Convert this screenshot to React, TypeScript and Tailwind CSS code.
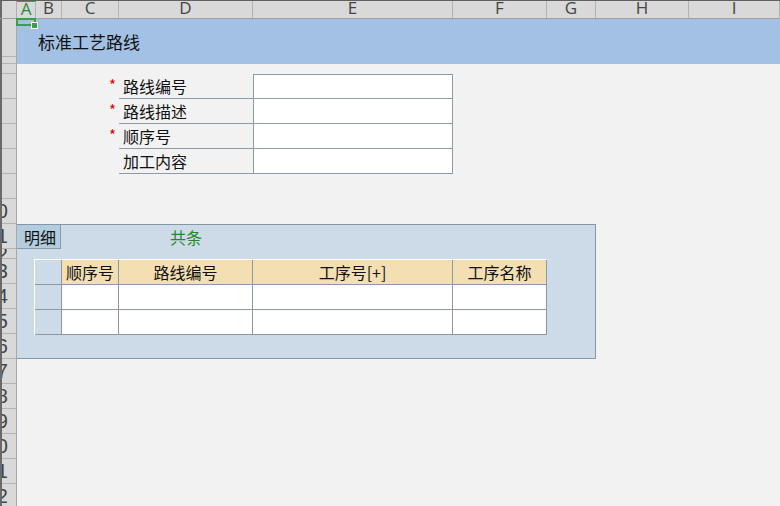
import React from "react";

const colHeads = [
  { name: "A", cls: "w-[19px] text-[#2f8a3c] border-t border-t-[#3d9e47]" },
  { name: "B", cls: "w-[26px]" },
  { name: "C", cls: "w-[57px]" },
  { name: "D", cls: "w-[134px]" },
  { name: "E", cls: "w-[200px]" },
  { name: "F", cls: "w-[94px]" },
  { name: "G", cls: "w-[49px]" },
  { name: "H", cls: "w-[93px]" },
  { name: "I", cls: "w-[91px]" },
];

const rowHeads = [
  { h: "h-[38px]", label: "" },
  { h: "h-[7px]", label: "" },
  { h: "h-[10px]", label: "" },
  { h: "h-[25px]", label: "" },
  { h: "h-[25px]", label: "" },
  { h: "h-[25px]", label: "" },
  { h: "h-[25px]", label: "" },
  { h: "h-[25px]", label: "" },
  { h: "h-[25px]", label: "10" },
  { h: "h-[25px]", label: "11" },
  { h: "h-[10px]", label: "12" },
  { h: "h-[25px]", label: "13" },
  { h: "h-[25px]", label: "14" },
  { h: "h-[25px]", label: "15" },
  { h: "h-[25px]", label: "16" },
  { h: "h-[25px]", label: "17" },
  { h: "h-[25px]", label: "18" },
  { h: "h-[25px]", label: "19" },
  { h: "h-[25px]", label: "20" },
  { h: "h-[25px]", label: "21" },
  { h: "h-[25px]", label: "22" },
];

const formRows = [
  { label: "路线编号", required: true },
  { label: "路线描述", required: true },
  { label: "顺序号", required: true },
  { label: "加工内容", required: false },
];

const gridCols = [
  { title: "顺序号", cls: "w-[57px]" },
  { title: "路线编号", cls: "w-[134px]" },
  { title: "工序号[+]", cls: "w-[200px]" },
  { title: "工序名称", cls: "w-[94px]" },
];

const cjk = "font-['Noto_Sans_CJK_SC',sans-serif]";

export default function App() {
  return (
    <div className="relative w-[780px] h-[506px] overflow-hidden bg-[#f2f2f2] flex flex-col">
      {/* column letters */}
      <div className="flex h-[19px] shrink-0 bg-[#d9d9d9] border-t border-[#5f5f5f] border-b border-b-[#a0a0a0] font-['Open_Sans',sans-serif] text-[17px] leading-[13px] text-[#444]">
        <div className="w-[17px] border-r border-[#b0b0b0] border-l-2 border-l-[#6a6a6a]" />
        {colHeads.map((c) => (
          <div key={c.name} className={`${c.cls} shrink-0 border-r border-[#b3b3b3] text-center`}>
            {c.name}
          </div>
        ))}
      </div>

      <div className="flex flex-1 min-h-0">
        {/* row numbers */}
        <div className="w-[17px] shrink-0 flex flex-col bg-[#d9d9d9] border-r border-[#a8a8a8] border-l-2 border-l-[#6a6a6a] font-['Liberation_Sans',sans-serif] text-[20px] text-[#444]">
          {rowHeads.map((r, i) => (
            <div key={i} className={`${r.h} shrink-0 border-b border-[#b3b3b3] flex items-center justify-end pr-[8px] overflow-hidden whitespace-nowrap`}>
              {r.label}
            </div>
          ))}
        </div>

        {/* sheet area */}
        <div className={`flex-1 flex flex-col ${cjk} text-[16px] text-[#111]`}>
          <div className="h-[45px] shrink-0 bg-[#a2c1e4] flex items-center pl-[21px] text-[17px]">
            标准工艺路线
          </div>

          {/* header form */}
          <div className="mt-[10px] ml-[92px] flex flex-col">
            {formRows.map((r, i) => (
              <div key={r.label} className="flex h-[25px]">
                <div className="w-[10px] text-[#e00000] text-[15px] leading-[22px]">{r.required ? "*" : ""}</div>
                <div className="w-[134px] border-b border-[#8e9aa6] flex items-center pl-[4px]">{r.label}</div>
                <div className={`w-[200px] bg-white border-x border-b border-[#8e9aa6] ${i === 0 ? "border-t" : ""}`} />
              </div>
            ))}
          </div>

          {/* detail panel */}
          <div className="mt-[50px] w-[579px] h-[135px] shrink-0 bg-[#cddbe8] border-y border-r border-[#8496a8] flex flex-col">
            <div className="flex h-[24px] shrink-0">
              <div className="w-[44px] bg-[#b3cde0] border-r border-b border-[#8a9aa8] flex items-center pl-[7px]">明细</div>
              <div className="w-[58px]" />
              <div className="w-[134px] flex items-center justify-center text-[#1f8a2a]">共条</div>
            </div>

            <div className="mt-[10px] ml-[17px] w-[513px] border-l border-t border-white flex flex-col">
              <div className="flex h-[25px]">
                <div className="w-[27px] border-r border-b border-[#8c99a5]" />
                {gridCols.map((c) => (
                  <div key={c.title} className={`${c.cls} bg-[#f3dfb1] border-r border-b border-[#8c99a5] flex items-center justify-center`}>
                    {c.title}
                  </div>
                ))}
              </div>
              {[0, 1].map((r) => (
                <div key={r} className="flex h-[25px]">
                  <div className="w-[27px] border-r border-b border-[#8c99a5]" />
                  {gridCols.map((c) => (
                    <div key={c.title} className={`${c.cls} bg-white border-r border-b border-[#8c99a5]`} />
                  ))}
                </div>
              ))}
            </div>
          </div>
        </div>
      </div>

      {/* active cell cursor with fill handle */}
      <div className="absolute left-[16px] top-[18px] w-[20px] h-[8px] border-2 border-[#3d9e47]" />
      <div className="absolute left-[31px] top-[22px] w-[7px] h-[7px] bg-[#3d9e47] border border-white" />
    </div>
  );
}
